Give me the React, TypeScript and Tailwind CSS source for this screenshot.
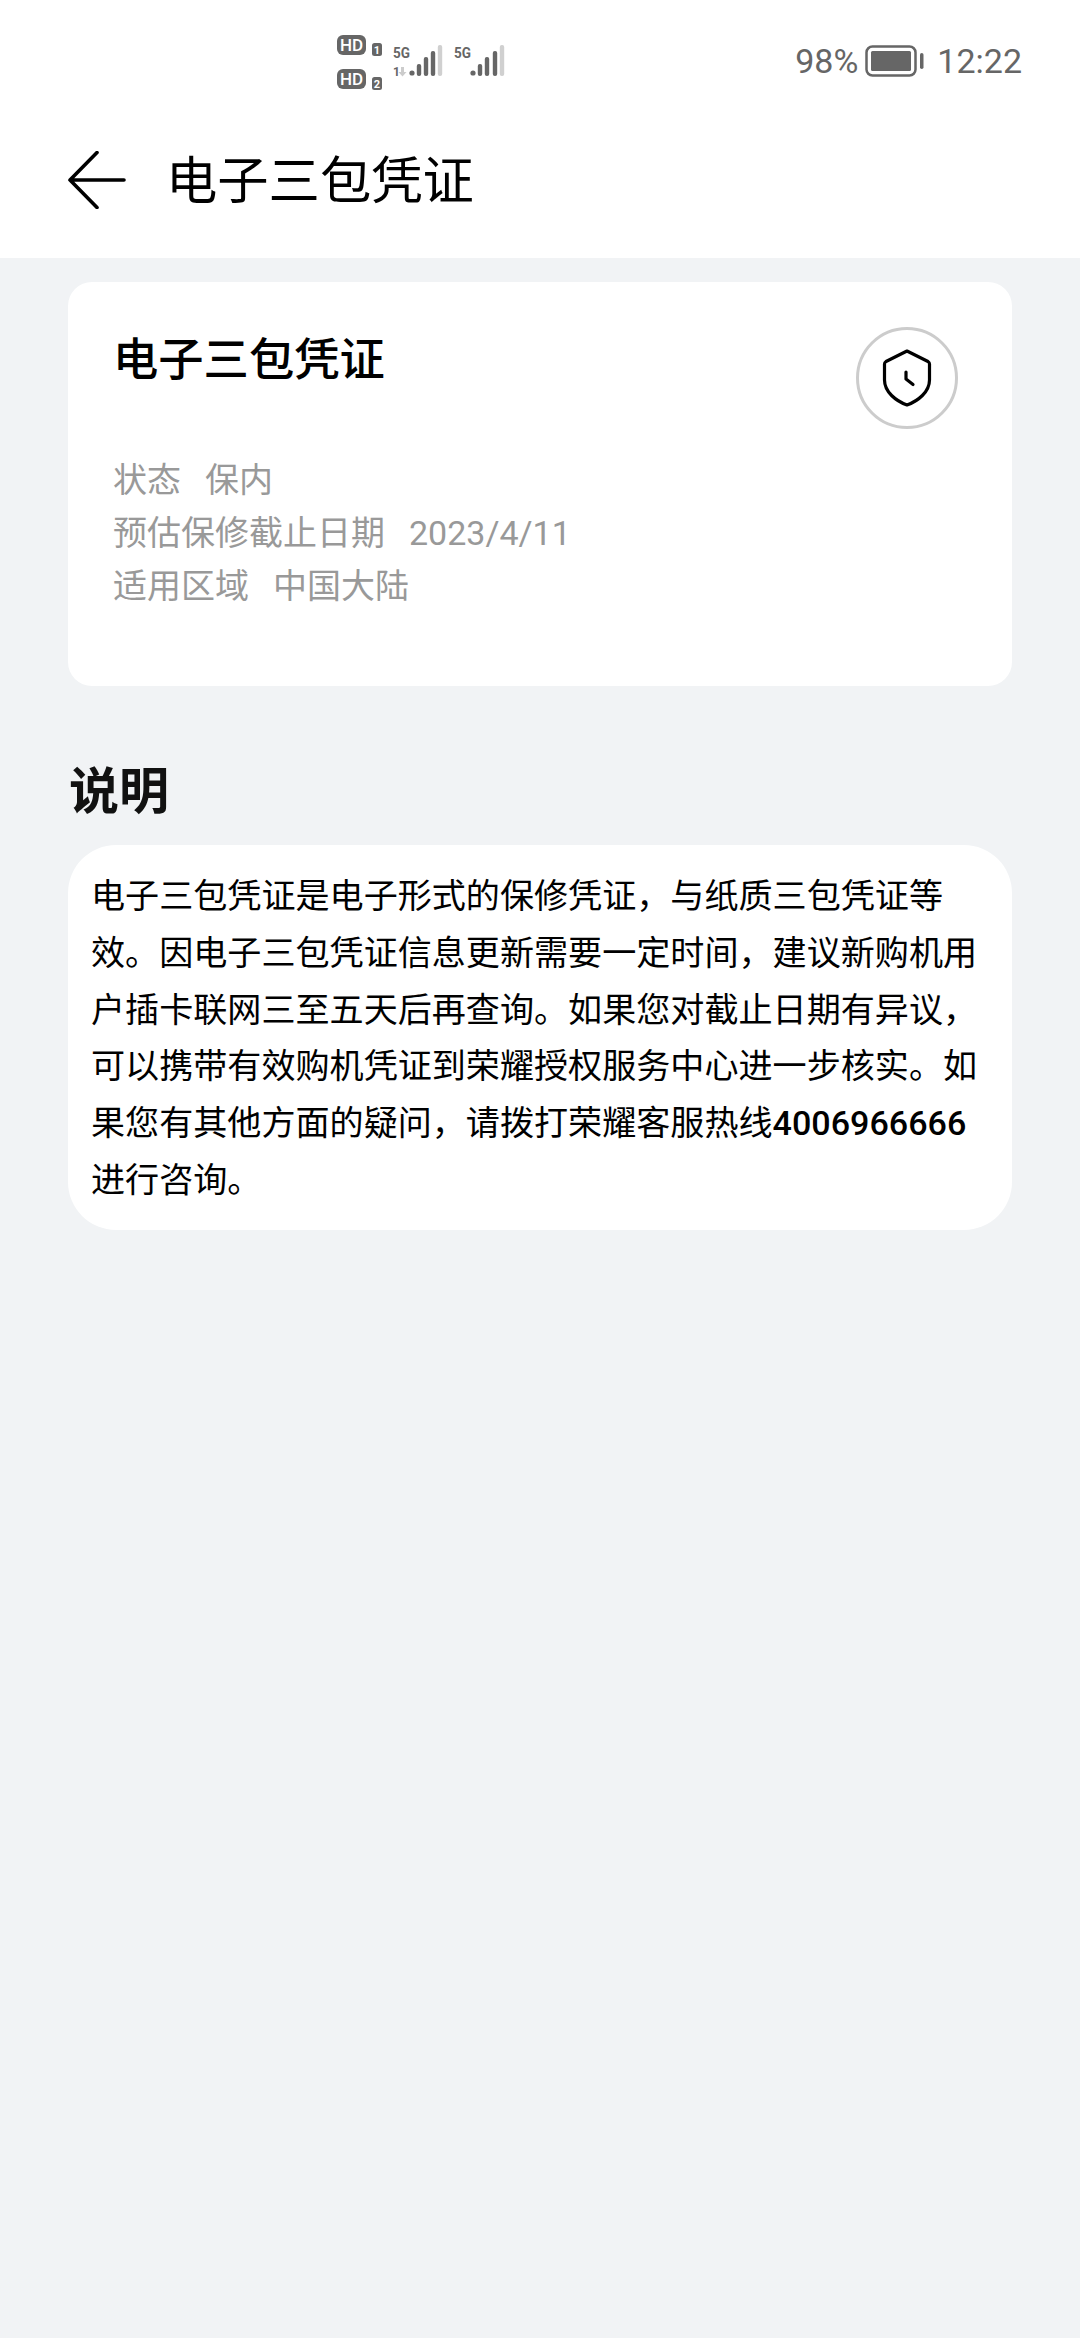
const cjk = "font-['Roboto','Noto_Sans_CJK_SC',sans-serif]";

const SignalBars = ({ x }: { x: number[] }) => (
  <>
    <circle cx={x[0]} cy="42" r="2.6" />
    <rect x={x[1] - 2.2} y="33" width="4.4" height="12" rx="2" />
    <rect x={x[2] - 2.2} y="26" width="4.4" height="19" rx="2" />
    <rect x={x[3] - 2.2} y="20" width="4.4" height="25" rx="2" />
    <rect x={x[4] - 2.2} y="14" width="4.4" height="31" rx="2" fill="#d0d0d0" />
  </>
);

const SignalIcons = () => (
  <svg width="180" height="60" viewBox="0 0 180 60" className="ml-[336px] shrink-0" fill="#666">
    {/* HD 1 */}
    <rect x="1" y="4" width="29" height="20" rx="6" />
    <text x="15.5" y="19.5" textAnchor="middle" fontSize="17" fontWeight="500" fill="#fff" fontFamily="Roboto">HD</text>
    <rect x="36" y="12" width="10" height="13" rx="2.5" />
    <text x="41" y="23" textAnchor="middle" fontSize="11" fontWeight="700" fill="#fff" fontFamily="Roboto">1</text>
    {/* HD 2 */}
    <rect x="1" y="38" width="29" height="20" rx="6" />
    <text x="15.5" y="53.5" textAnchor="middle" fontSize="17" fontWeight="500" fill="#fff" fontFamily="Roboto">HD</text>
    <rect x="36" y="46" width="10" height="13" rx="2.5" />
    <text x="41" y="57" textAnchor="middle" fontSize="11" fontWeight="700" fill="#fff" fontFamily="Roboto">2</text>
    {/* first sim */}
    <text x="57" y="27" fontSize="15" fontWeight="700" fontFamily="Roboto" textLength="17" lengthAdjust="spacingAndGlyphs">5G</text>
    <text x="57" y="45" fontSize="12" fontWeight="700" fontFamily="Roboto">1</text>
    <path d="M65 36h3v5h2.5l-4 4.5-4-4.5h2.5z" fill="#ccc" />
    <SignalBars x={[76, 83, 90, 97, 104]} />
    {/* second sim */}
    <text x="118" y="27" fontSize="15" fontWeight="700" fontFamily="Roboto" textLength="17" lengthAdjust="spacingAndGlyphs">5G</text>
    <SignalBars x={[137, 144, 151, 159, 166]} />
  </svg>
);

const Battery = () => (
  <svg width="60" height="32" viewBox="0 0 60 32" fill="none">
    <rect x="1.5" y="1.5" width="49" height="29" rx="6" stroke="#666" strokeWidth="2.5" />
    <rect x="6" y="6" width="40" height="20" rx="1.5" fill="#666" />
    <rect x="55" y="8" width="3.5" height="16" rx="1.75" fill="#666" />
  </svg>
);

const ShieldClock = () => (
  <svg width="50" height="58" viewBox="0 0 50 58" fill="none" stroke="#000" strokeWidth="3.2" strokeLinecap="round" strokeLinejoin="round">
    <path d="M25 2 L46 12.5 Q47.5 13.5 47.5 15 V31 C47.5 43 36 52 25 56 C14 52 2.5 43 2.5 31 V15 Q2.5 13.5 4 12.5 Z" />
    <path d="M24 23 V30 L31 35.5" />
  </svg>
);

export default function App() {
  return (
    <div className={`min-h-[2338px] bg-[#f1f3f5] text-black ${cjk}`}>
      <header className="bg-white h-[258px]">
        <div className="flex items-center h-[120px] pt-[2px]">
          <SignalIcons />
          <div className="ml-auto mr-[58px] flex items-center text-[#666] text-[34px]">
            <span>98%</span>
            <span className="ml-[7px] flex"><Battery /></span>
            <span className="ml-[12px]">12:22</span>
          </div>
        </div>
        <div className="flex items-center h-[60px] mt-[30px] pl-[68px]">
          <svg width="58" height="58" viewBox="0 0 58 58" fill="none" stroke="#000" strokeWidth="3.6" strokeLinecap="round" strokeLinejoin="round">
            <path d="M29 1.5 L2 29 L29 56.5 M2 29 H56" />
          </svg>
          <h1 className="ml-[40px] mt-[3px] text-[51.3px] leading-none">电子三包凭证</h1>
        </div>
      </header>

      <main className="px-[68px] pt-[24px]">
        <section className="bg-white rounded-[24px] h-[404px] pl-[45px] pr-[54px] pt-[46px]">
          <div className="flex justify-between">
            <h2 className="text-[45.3px] font-medium leading-[64px] mt-[1px]">电子三包凭证</h2>
            <div className="w-[102px] h-[102px] rounded-full border-[3px] border-[#ccc] flex items-center justify-center -mt-[1px]">
              <ShieldClock />
            </div>
          </div>
          <div className="mt-[25px] text-[34px] leading-[53px] text-[#999]">
            <p><span>状态</span><span className="ml-[24px]">保内</span></p>
            <p><span>预估保修截止日期</span><span className="ml-[24px]">2023/4/11</span></p>
            <p><span>适用区域</span><span className="ml-[24px]">中国大陆</span></p>
          </div>
        </section>

        <h2 className="mt-[71px] text-[50px] font-bold leading-[70px] text-[#111] ml-[1px]">说明</h2>

        <section className="mt-[18px] bg-white rounded-[48px] pl-[23px] pr-[24px] pt-[23px] pb-[21px] text-[34.1px] leading-[56.8px]">
          电子三包凭证是电子形式的保修凭证，与纸质三包凭证等效。因电子三包凭证信息更新需要一定时间，建议新购机用户插卡联网三至五天后再查询。如果您对截止日期有异议，可以携带有效购机凭证到荣耀授权服务中心进一步核实。如果您有其他方面的疑问，请拨打荣耀客服热线<span className="font-medium">4006966666</span>进行咨询。
        </section>
      </main>
    </div>
  );
}
